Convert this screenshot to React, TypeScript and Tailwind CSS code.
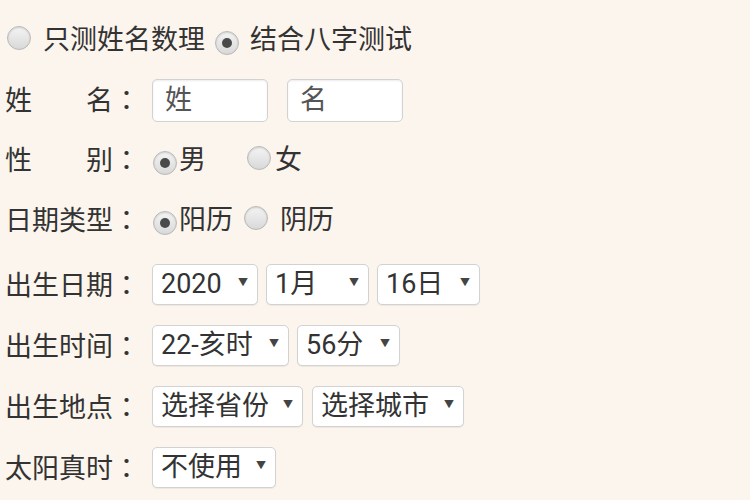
import React from 'react'

const font = { fontFamily: 'Roboto, "Noto Sans CJK SC", sans-serif' }

function Radio({ checked }: { checked?: boolean }) {
  return (
    <span className="inline-flex h-[24px] w-[24px] shrink-0 items-center justify-center rounded-full border border-[#b9b9b9] bg-gradient-to-b from-[#f4f4f4] to-[#d9d9d9] shadow-[inset_0_1px_2px_rgba(0,0,0,0.15)]">
      {checked && <span className="h-[10px] w-[10px] rounded-full bg-[#4a4a4a]" />}
    </span>
  )
}

function Select({ label, w }: { label: string; w: string }) {
  return (
    <div className={`flex h-[41px] items-center justify-between rounded-[5px] border border-[#d2d2d2] bg-white pl-[8px] pr-[9px] shadow-[0_1px_1px_rgba(0,0,0,0.06)] ${w}`}>
      <span className="whitespace-nowrap">{label}</span>
      <span className="-mt-[3px] text-[10px] text-[#444]">▼</span>
    </div>
  )
}

function Row({ label, children, h = 'h-[60px]' }: { label: string; children?: React.ReactNode; h?: string }) {
  return (
    <div className={`flex items-center ${h}`}>
      <span className="w-[147px] shrink-0 whitespace-pre">
        {label}
        <span className="font-['Noto_Sans_CJK_TC']">：</span>
      </span>
      <div className="flex items-center">{children}</div>
    </div>
  )
}

export default function App() {
  return (
    <div className="h-[500px] w-[750px] overflow-hidden bg-[#fcf5ed] pl-[5px] pt-[10px] text-[27px] leading-none text-[#333]" style={font}>
      <div className="flex h-[60px] items-center">
        <span className="ml-[2px]"><Radio /></span>
        <span className="ml-[12px]">只测姓名数理</span>
        <span className="ml-[10px]"><Radio checked /></span>
        <span className="ml-[11px]">结合八字测试</span>
      </div>

      <Row label={'姓　　名'}>
        <div className="flex h-[43px] w-[116px] items-center rounded-[5px] border border-[#d2d2d2] bg-white pl-[12px] text-[#555] shadow-[inset_0_1px_2px_rgba(0,0,0,0.08)]">姓</div>
        <div className="ml-[19px] flex h-[43px] w-[116px] items-center rounded-[5px] border border-[#d2d2d2] bg-white pl-[12px] text-[#555] shadow-[inset_0_1px_2px_rgba(0,0,0,0.08)]">名</div>
      </Row>

      <Row label={'性　　别'}>
        <span className="ml-[1px]"><Radio checked /></span>
        <span className="ml-[2px]">男</span>
        <span className="ml-[41px]"><Radio /></span>
        <span className="ml-[4px]">女</span>
      </Row>

      <Row label="日期类型">
        <span className="ml-[1px]"><Radio checked /></span>
        <span className="ml-[2px]">阳历</span>
        <span className="ml-[11px]"><Radio /></span>
        <span className="ml-[12px]">阴历</span>
      </Row>

      <div className="mt-[4px]">
        <Row label="出生日期" h="h-[61px]">
          <div className="flex gap-[8px]">
            <Select label="2020" w="w-[106px]" />
            <Select label="1月" w="w-[103px]" />
            <Select label="16日" w="w-[103px]" />
          </div>
        </Row>
        <Row label="出生时间" h="h-[61px]">
          <div className="flex gap-[8px]">
            <Select label="22-亥时" w="w-[137px]" />
            <Select label="56分" w="w-[103px]" />
          </div>
        </Row>
        <Row label="出生地点" h="h-[61px]">
          <div className="flex gap-[9px]">
            <Select label="选择省份" w="w-[151px]" />
            <Select label="选择城市" w="w-[152px]" />
          </div>
        </Row>
        <Row label="太阳真时" h="h-[61px]">
          <Select label="不使用" w="w-[124px]" />
        </Row>
      </div>
    </div>
  )
}
